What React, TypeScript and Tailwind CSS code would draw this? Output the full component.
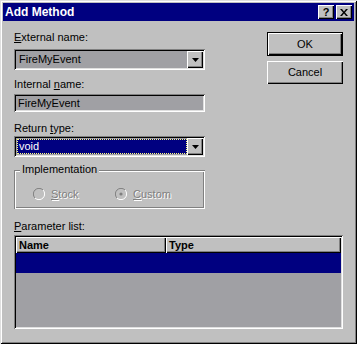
const font = "font-['Liberation_Sans',Arial,sans-serif]";

const sunken =
  "shadow-[inset_1px_1px_0_#808080,inset_-1px_-1px_0_#ffffff,inset_2px_2px_0_#000000,inset_-2px_-2px_0_#dfdfdf]";
const raised =
  "shadow-[inset_1px_1px_0_#ffffff,inset_-1px_-1px_0_#000000,inset_-2px_-2px_0_#808080]";
const raisedDefault =
  "shadow-[inset_0_0_0_1px_#000000,inset_1px_1px_0_1px_#ffffff,inset_-1px_-1px_0_1px_#000000,inset_-2px_-2px_0_1px_#808080]";

const Label = ({ text, u }: { text: string; u: number }) => (
  <div className="text-[11px] leading-[13px] text-black">
    {text.slice(0, u)}
    <span className="underline underline-offset-[1px]">{text.charAt(u)}</span>
    {text.slice(u + 1)}
  </div>
);

const Arrow = () => (
  <div className={`flex h-[17px] w-[16px] items-center justify-center bg-[#c0c0c0] ${raised}`}>
    <svg width="7" height="4" viewBox="0 0 7 4">
      <path d="M0 0h7L3.5 4z" fill="#000" />
    </svg>
  </div>
);

const Combo = ({ value, focused }: { value: string; focused?: boolean }) => (
  <div className={`flex h-[21px] items-center bg-[#a0a0a4] p-[2px] ${sunken}`}>
    <div className="flex h-[17px] flex-1 items-center pl-[1px]">
      {focused ? (
        <div className="flex h-[15px] flex-1 items-center border border-dotted border-[#ffff80] bg-[#000080] pl-[1px] text-[11px] text-white">
          {value}
        </div>
      ) : (
        <span className="pl-[2px] text-[11px] text-black">{value}</span>
      )}
    </div>
    <Arrow />
  </div>
);

const Radio = ({ label, checked }: { label: string; checked?: boolean }) => (
  <div className="flex items-center gap-[6px]">
    <svg width="12" height="12" viewBox="0 0 12 12">
      <path d="M10 2A5.5 5.5 0 0 0 2 10" stroke="#808080" fill="none" />
      <path d="M2 10A5.5 5.5 0 0 0 10 2" stroke="#ffffff" fill="none" />
      <circle cx="6" cy="6" r="4" fill="#c0c0c0" />
      {checked && <circle cx="6" cy="6" r="1.6" fill="#808080" />}
    </svg>
    <span className="text-[11px] text-[#808080] [text-shadow:1px_1px_0_#ffffff]">
      <span className="underline">{label.charAt(0)}</span>
      {label.slice(1)}
    </span>
  </div>
);

export default function App() {
  return (
    <div
      className={`${font} h-[344px] w-[357px] bg-[#c0c0c0] p-[3px] shadow-[inset_1px_1px_0_#dfdfdf,inset_-1px_-1px_0_#000000,inset_2px_2px_0_#ffffff,inset_-2px_-2px_0_#808080]`}
    >
      <div className="flex h-[18px] items-center bg-[#000080] pl-[2px] pr-[2px]">
        <span className="text-[12px] font-bold text-white">Add Method</span>
        <div className="ml-auto flex">
          <div className={`flex h-[14px] w-[16px] items-center justify-center bg-[#c0c0c0] text-[11px] font-bold leading-none text-black ${raised}`}>
            ?
          </div>
          <div className={`ml-[2px] flex h-[14px] w-[16px] items-center justify-center bg-[#c0c0c0] ${raised}`}>
            <svg width="8" height="7" viewBox="0 0 8 7">
              <path d="M0 0h2l2 2.5L6 0h2L5 3.5 8 7H6L4 4.5 2 7H0l3-3.5z" fill="#000" />
            </svg>
          </div>
        </div>
      </div>

      <div className="px-[11px]">
        <div className="flex">
          <div className="flex w-[191px] flex-col pt-[10px]">
            <Label text="External name:" u={0} />
            <div className="mt-[5px]">
              <Combo value="FireMyEvent" />
            </div>
            <div className="mt-[8px]">
              <Label text="Internal name:" u={9} />
            </div>
            <div className={`mt-[3px] flex h-[18px] items-center bg-[#a0a0a4] pl-[4px] text-[11px] text-black ${sunken}`}>
              FireMyEvent
            </div>
            <div className="mt-[10px]">
              <Label text="Return type:" u={7} />
            </div>
            <div className="mt-[1px]">
              <Combo value="void" focused />
            </div>
            <div className="relative mt-[13px] h-[39px] shadow-[inset_1px_1px_0_#808080,inset_-1px_-1px_0_#ffffff,inset_2px_2px_0_#ffffff,inset_-2px_-2px_0_#808080]">
              <span className="absolute -top-[7px] left-[6px] bg-[#c0c0c0] px-[2px] text-[11px] leading-[13px] text-black">
                Implementation
              </span>
              <div className="flex pl-[19px] pt-[16px]">
                <div className="w-[82px]">
                  <Radio label="Stock" />
                </div>
                <Radio label="Custom" checked />
              </div>
            </div>
          </div>

          <div className="ml-auto flex w-[76px] flex-col pt-[11px]">
            <button className={`h-[24px] bg-[#c0c0c0] text-[11px] text-black ${raisedDefault}`}>OK</button>
            <button className={`mt-[5px] h-[23px] bg-[#c0c0c0] text-[11px] text-black ${raised}`}>Cancel</button>
          </div>
        </div>

        <div className="mt-[11px]">
          <Label text="Parameter list:" u={0} />
        </div>
        <div className={`mt-[2px] flex h-[94px] flex-col bg-[#a0a0a4] p-[2px] ${sunken}`}>
          <div className="flex h-[16px] text-[11px] font-bold text-black">
            <div className={`flex w-[150px] items-center bg-[#c0c0c0] pl-[3px] ${raised}`}>Name</div>
            <div className={`flex flex-1 items-center bg-[#c0c0c0] pl-[3px] ${raised}`}>Type</div>
          </div>
          <div className="h-[20px] bg-[#000080]" />
        </div>
      </div>
    </div>
  );
}
